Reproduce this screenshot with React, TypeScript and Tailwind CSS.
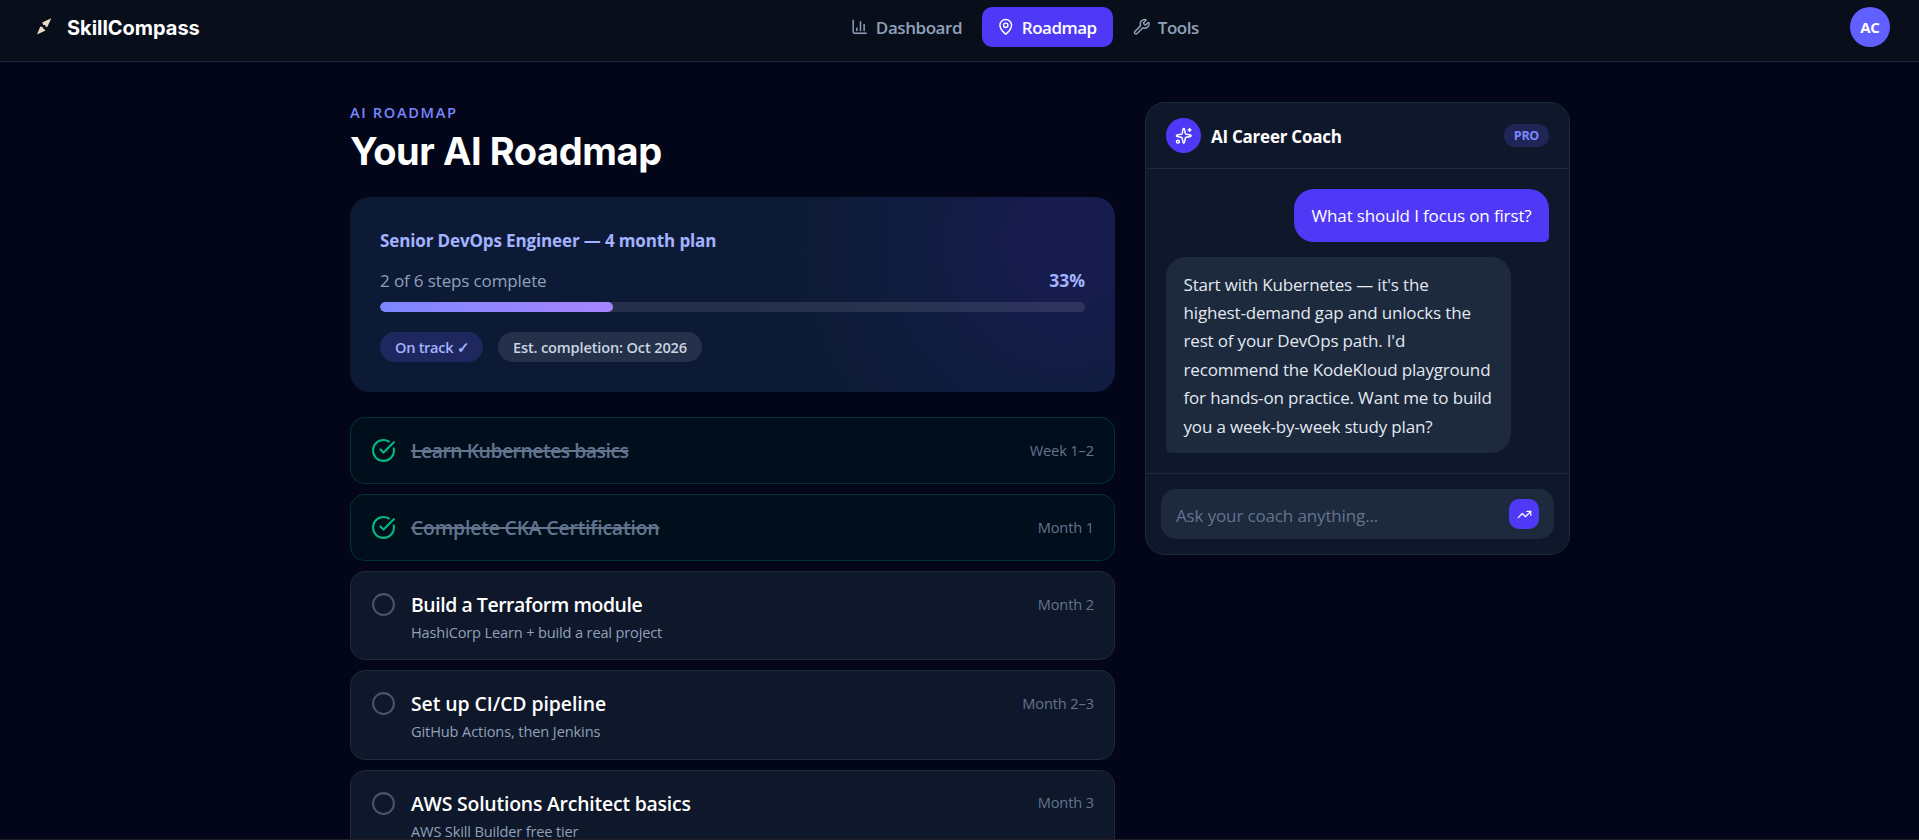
import React from "react";
import { ChartColumn, CircleCheckBig, Circle, MapPin, Sparkles, TrendingUp, Wrench } from "lucide-react";

type Step = {
  title: string;
  titleClass: string;
  note?: string;
  noteClass?: string;
  when: string;
  done?: boolean;
};

const steps: Step[] = [
  { title: "Learn Kubernetes basics", titleClass: "tracking-[-0.5px]", when: "Week 1–2", done: true },
  { title: "Complete CKA Certification", titleClass: "tracking-[-0.18px]", when: "Month 1", done: true },
  {
    title: "Build a Terraform module",
    titleClass: "tracking-[-0.43px]",
    note: "HashiCorp Learn + build a real project",
    noteClass: "tracking-[-0.16px]",
    when: "Month 2",
  },
  {
    title: "Set up CI/CD pipeline",
    titleClass: "pt-[0.5px] tracking-[-0.06px]",
    note: "GitHub Actions, then Jenkins",
    noteClass: "-mt-[0.5px] tracking-[-0.12px]",
    when: "Month 2–3",
  },
  {
    title: "AWS Solutions Architect basics",
    titleClass: "pt-[0.5px] tracking-[-0.2px]",
    note: "AWS Skill Builder free tier",
    noteClass: "tracking-[-0.16px]",
    when: "Month 3",
  },
];

function Logo() {
  return (
    <div className="flex items-center gap-[9px]">
      <svg width="28" height="28" viewBox="0 0 28 28" fill="#eadcc3">
        <path d="M21.3 5.2 12.2 9.6 13.3 12.1 15.2 11.9 15.6 13.6 17.2 14.2Z" />
        <path d="M7 21.4 10.3 13.4 12.3 14.1 13.4 15.6 15.6 17.4Z" />
      </svg>
      <span className="pt-px font-['Inter',sans-serif] text-[20px] leading-[28px] font-bold tracking-[-0.03px] text-white">
        SkillCompass
      </span>
    </div>
  );
}

function Header() {
  return (
    <header className="flex h-[62px] shrink-0 items-start justify-between border-b border-slate-800 bg-[#090e1b] pt-[7px] pr-[29px] pl-[30px]">
      <div className="flex h-10 items-center">
        <Logo />
      </div>
      <nav className="flex gap-[5px] text-[17px] leading-[38px] text-slate-400">
        <a className="flex h-10 items-center gap-[7.5px] px-[15px] font-semibold">
          <ChartColumn size={17.5} />
          <span className="w-[86px] pt-[2px] tracking-[-0.44px]">Dashboard</span>
        </a>
        <a className="flex h-10 items-center gap-[7.5px] rounded-[10px] bg-indigo-600 px-[15px] font-semibold text-white">
          <MapPin size={17.5} />
          <span className="w-[76px] pt-[2px] tracking-[-0.5px]">Roadmap</span>
        </a>
        <a className="flex h-10 items-center gap-[7.5px] px-[15px] font-semibold">
          <Wrench size={17.5} />
          <span className="w-[41px] pt-[2px] tracking-[-0.5px]">Tools</span>
        </a>
      </nav>
      <div className="flex size-10 items-center justify-center rounded-full bg-indigo-500 text-[15px] font-bold tracking-[-0.2px] text-white">
        AC
      </div>
    </header>
  );
}

function ProgressCard() {
  return (
    <section className="mt-[23px] rounded-[20px] bg-[#0d1a36] bg-[radial-gradient(circle_at_715px_48px,#181d4e_0px,#161c4b_60px,#101c40_150px,#0e1b38_240px,#0d1a36_340px)] p-[30px]">
      <h2 className="pt-px text-[17px] leading-[25px] font-bold tracking-[-0.13px] text-indigo-300">
        Senior DevOps Engineer — 4 month plan
      </h2>
      <div className="mt-[15px] flex justify-between leading-[26px]">
        <span className="text-[17px] tracking-[-0.13px] text-slate-400">2 of 6 steps complete</span>
        <span className="text-[17.5px] leading-[25px] font-bold text-indigo-300">33%</span>
      </div>
      <div className="mt-2 h-[10px] overflow-hidden rounded-full bg-white/10">
        <div className="h-full w-[33%] rounded-full bg-linear-to-r from-indigo-400 to-violet-400" />
      </div>
      <div className="mt-5 flex gap-[15px] text-[14.6px] leading-[30px] font-semibold">
        <span className="w-[103px] rounded-full bg-indigo-500/20 pl-[15px] tracking-[-0.3px] whitespace-nowrap text-indigo-300">
          On track ✓
        </span>
        <span className="w-[204px] rounded-full bg-white/10 pl-[15px] tracking-[-0.16px] whitespace-nowrap text-slate-300">
          Est. completion: Oct 2026
        </span>
      </div>
    </section>
  );
}

function StepRow({ step }: { step: Step }) {
  return (
    <li
      className={
        step.done
          ? "flex gap-[15px] rounded-[15px] border border-emerald-500/20 bg-emerald-500/5 px-5 py-[17.5px]"
          : "flex gap-[15px] rounded-[15px] border border-slate-800 bg-slate-900 px-5 py-[17.5px]"
      }
    >
      {step.done ? (
        <CircleCheckBig size={25} className="mt-[2.5px] shrink-0 text-emerald-500" />
      ) : (
        <Circle size={25} className="mt-[2.5px] shrink-0 text-slate-600" />
      )}
      <div className="min-w-0 flex-1">
        <div
          className={`text-[19.4px] leading-[30px] font-semibold ${step.titleClass} ${
            step.done ? "text-slate-500 line-through decoration-2" : "text-white"
          }`}
        >
          {step.title}
        </div>
        {step.note && (
          <div className={`pt-[2.4px] text-[14.6px] leading-5 text-slate-400 ${step.noteClass}`}>{step.note}</div>
        )}
      </div>
      <span className="text-[14.6px] leading-[28.8px] tracking-[-0.12px] text-slate-500">{step.when}</span>
    </li>
  );
}

function Coach() {
  return (
    <aside className="w-[425px] shrink-0 self-start rounded-[20px] border border-slate-800 bg-slate-900">
      <div className="flex items-center border-b border-slate-800 px-5 py-[15px]">
        <div className="flex size-[35px] items-center justify-center rounded-full bg-indigo-600 text-white">
          <Sparkles size={17.5} />
        </div>
        <h3 className="ml-[10px] flex-1 pt-[2px] text-[17px] leading-[26px] font-bold tracking-[-0.25px] text-white">
          AI Career Coach
        </h3>
        <span className="rounded-full bg-indigo-500/20 px-[10px] text-[12.5px] leading-[23px] font-bold tracking-[-0.3px] text-indigo-400">
          PRO
        </span>
      </div>
      <div className="flex flex-col gap-[15px] p-5 text-[17px] leading-[28.43px]">
        <div className="w-[255px] self-end rounded-[20px] rounded-br-[5px] bg-indigo-600 pt-[13px] pb-3 pl-[17.5px] tracking-[-0.14px] whitespace-nowrap text-white">
          What should I focus on first?
        </div>
        <div className="w-[345px] rounded-[20px] rounded-bl-[5px] bg-slate-800 pt-[13.1px] pb-[11.9px] pl-[17.5px] tracking-[-0.17px] whitespace-nowrap text-slate-200">
          Start with Kubernetes — it's the
          <br />
          highest-demand gap and unlocks the
          <br />
          rest of your DevOps path. I'd
          <br />
          recommend the KodeKloud playground
          <br />
          for hands-on practice. Want me to build
          <br />
          you a week-by-week study plan?
        </div>
      </div>
      <div className="border-t border-slate-800 p-[15px]">
        <div className="flex h-[50px] items-center justify-between rounded-[15px] bg-slate-800 px-[15px]">
          <span className="pt-[3px] text-[17px] leading-[26px] tracking-[-0.14px] text-slate-500">
            Ask your coach anything...
          </span>
          <button className="flex size-[30px] items-center justify-center rounded-[10px] bg-indigo-600 text-white">
            <TrendingUp size={15} />
          </button>
        </div>
      </div>
    </aside>
  );
}

export default function App() {
  return (
    <div className="flex h-[840px] flex-col overflow-hidden bg-slate-950 font-['Open_Sans',sans-serif]">
      <Header />
      <main className="flex min-h-0 flex-1 gap-[30px] overflow-hidden pt-10 pl-[350px]">
        <div className="w-[765px] shrink-0">
          <p className="text-[14.6px] leading-5 font-semibold tracking-[1.65px] text-indigo-400">AI ROADMAP</p>
          <h1 className="mt-[7px] font-['Inter',sans-serif] text-[38px] leading-[45px] font-bold tracking-[-0.42px] text-white">
            Your AI Roadmap
          </h1>
          <ProgressCard />
          <ul className="mt-[25px] flex flex-col gap-[10px]">
            {steps.map((s) => (
              <StepRow key={s.title} step={s} />
            ))}
          </ul>
        </div>
        <Coach />
      </main>
      <div className="h-px shrink-0 bg-[#211d24]" />
    </div>
  );
}
